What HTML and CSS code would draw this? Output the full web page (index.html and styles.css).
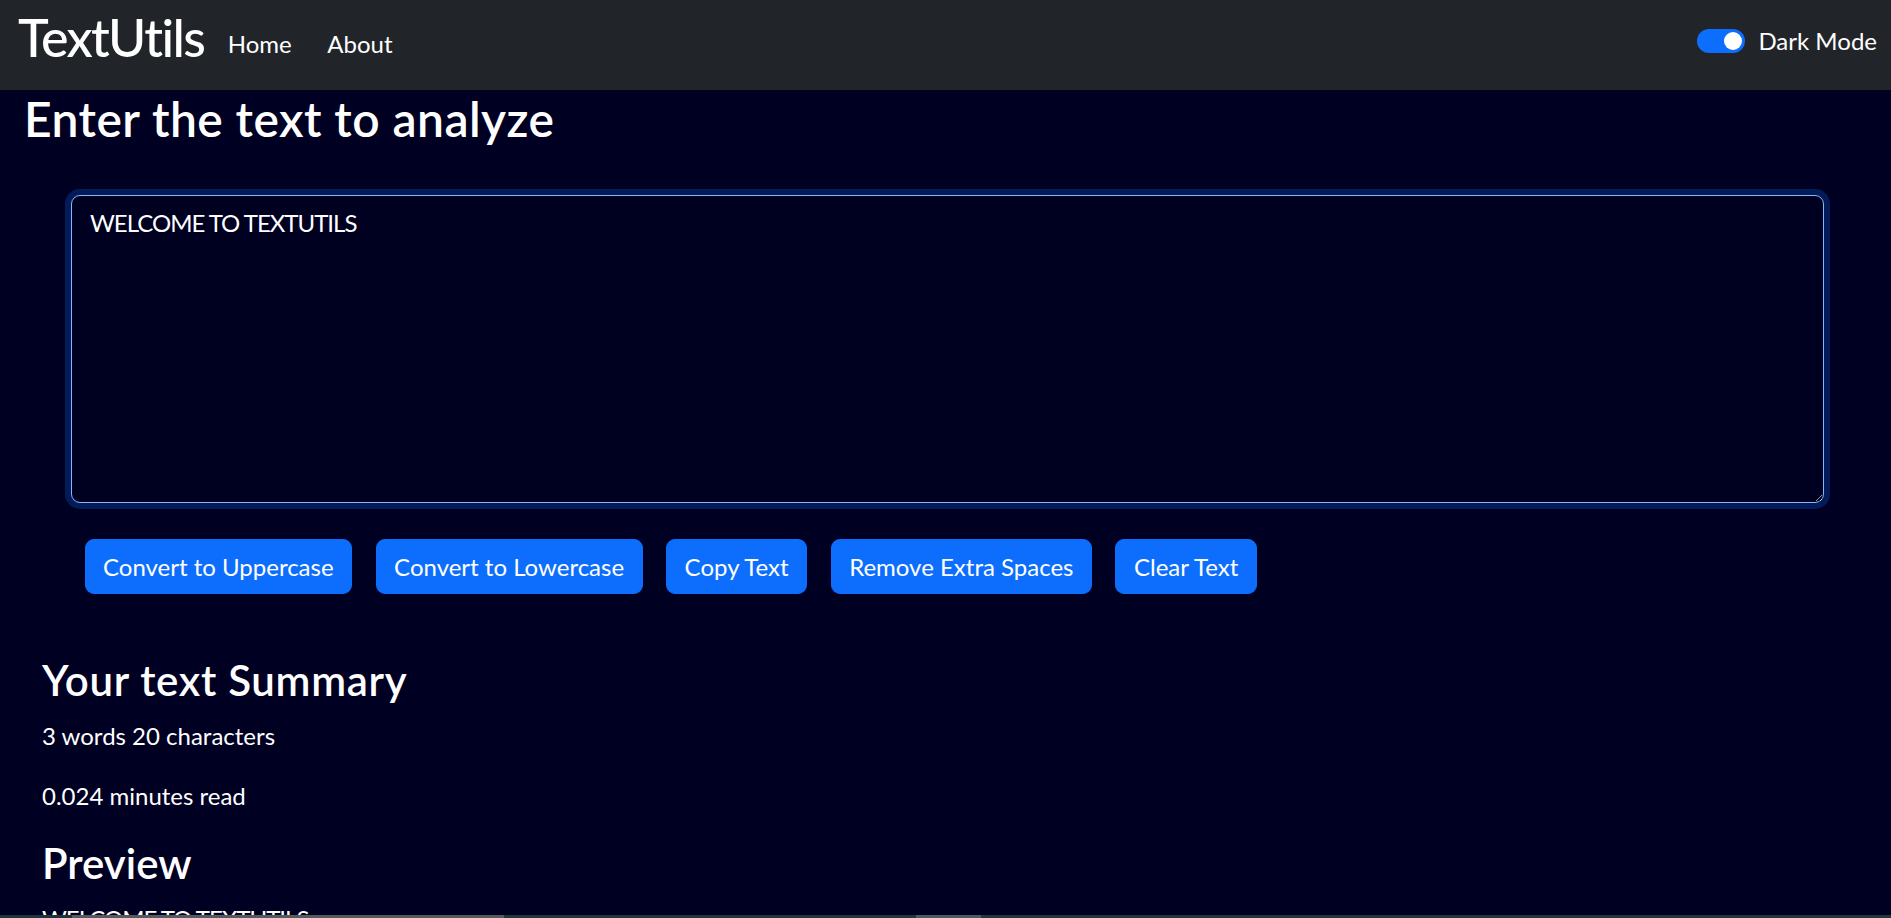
FILE: index.html
```html
<!DOCTYPE html>
<html lang="en">
<head>
<meta charset="utf-8">
<title>TextUtils</title>
<link rel="stylesheet" href="styles.css">
</head>
<body>
<nav class="navbar">
  <a class="brand" href="#">TextUtils</a>
  <ul class="nav-links">
    <li><a class="nav-link" href="#">Home</a></li>
    <li><a class="nav-link" href="#">About</a></li>
  </ul>
  <div class="mode">
    <span class="switch"><span class="knob"></span></span>
    <span class="mode-label">Dark Mode</span>
  </div>
</nav>
<main class="page">
  <h1 class="title">Enter the text to analyze</h1>
  <div class="editor">
    <textarea class="text-input" spellcheck="false">WELCOME TO TEXTUTILS</textarea>
  </div>
  <div class="actions">
    <button class="btn">Convert to Uppercase</button>
    <button class="btn">Convert to Lowercase</button>
    <button class="btn">Copy Text</button>
    <button class="btn">Remove Extra Spaces</button>
    <button class="btn">Clear Text</button>
  </div>
  <section class="summary">
    <h2 class="sub sub-wide">Your text Summary</h2>
    <p class="line">3 words 20 characters</p>
    <p class="line">0.024 minutes read</p>
    <h2 class="sub">Preview</h2>
    <p class="line caps">WELCOME TO TEXTUTILS</p>
  </section>
</main>
<div class="hscroll"><span class="seg-a"></span><span class="seg-b"></span><span class="seg-c"></span></div>
</body>
</html>
```
FILE: styles.css
```css
html, body {
  margin: 0;
  padding: 0;
  height: 100%;
  overflow: hidden;
}
body {
  background: #000023;
  color: #ffffff;
  font-family: Lato, "Noto Sans", sans-serif;
  font-size: 24px;
  line-height: 36px;
}
.navbar {
  height: 90px;
  box-sizing: border-box;
  background: #212529;
  display: flex;
  align-items: flex-start;
  padding: 0 14px 0 18px;
}
.brand {
  color: #fff;
  text-decoration: none;
  font-size: 52px;
  line-height: 62.4px;
  font-weight: 500;
  letter-spacing: -1.6px;
  margin-top: 6px;
  margin-right: 23.5px;
}
.nav-links {
  list-style: none;
  display: flex;
  gap: 35.5px;
  margin: 26px 0 0 0;
  padding: 0;
}
.nav-link {
  color: #fff;
  text-decoration: none;
  font-size: 24px;
  line-height: 36px;
}
.mode {
  margin-left: auto;
  margin-top: 23.4px;
  display: flex;
  align-items: center;
  gap: 13px;
}
.switch {
  width: 48px;
  height: 24px;
  box-sizing: border-box;
  border-radius: 12px;
  background: #0d6efd;
  display: flex;
  align-items: center;
  justify-content: flex-end;
  padding-right: 3px;
}
.knob {
  width: 18px;
  height: 18px;
  border-radius: 50%;
  background: #fff;
}
.mode-label {
  font-size: 24px;
  line-height: 36px;
}
.page {
  padding: 0;
}
.title {
  margin: 0;
  padding-left: 24px;
  font-size: 48px;
  line-height: 57.6px;
  font-weight: 600;
  letter-spacing: 0.45px;
}
.editor {
  margin: 47.8px 0 0 71px;
  width: 1753px;
}
.text-input {
  display: block;
  width: 100%;
  height: 308px;
  box-sizing: border-box;
  margin: 0;
  padding: 9px 18px;
  border: 1.5px solid #86b7fe;
  border-radius: 9px;
  background: #000021;
  color: #fff;
  font-family: Lato, "Noto Sans", sans-serif;
  font-size: 24px;
  line-height: 36px;
  letter-spacing: -1px;
  box-shadow: 0 0 0 6px rgba(13, 110, 253, 0.25);
  outline: none;
  resize: vertical;
}
.actions {
  margin-top: 36px;
  padding-left: 84.5px;
  display: flex;
  gap: 23.5px;
}
.btn {
  background: #0d6efd;
  border: 1.5px solid #0d6efd;
  color: #fff;
  border-radius: 9px;
  padding: 9px 17.5px;
  font-family: Lato, "Noto Sans", sans-serif;
  font-size: 24px;
  line-height: 35px;
  cursor: pointer;
}
.summary {
  margin-top: 60.5px;
  padding-left: 42px;
}
.sub {
  margin: 0 0 12.8px 0;
  font-size: 42px;
  line-height: 50.4px;
  font-weight: 600;
}
.sub-wide {
  letter-spacing: 0.7px;
}
.line {
  margin: 0 0 24px 0;
}
.caps {
  letter-spacing: -1px;
}
.hscroll {
  position: fixed;
  left: 0;
  right: 0;
  bottom: 0;
  height: 3px;
  background: #22363d;
}
.hscroll span {
  position: absolute;
  top: 0;
  bottom: 0;
}
.seg-a { left: 0; width: 72px; background: #1f3338; }
.seg-b { left: 72px; width: 432px; background: #555a5c; }
.seg-c { left: 916px; width: 65px; background: #4b5a60; }
```
